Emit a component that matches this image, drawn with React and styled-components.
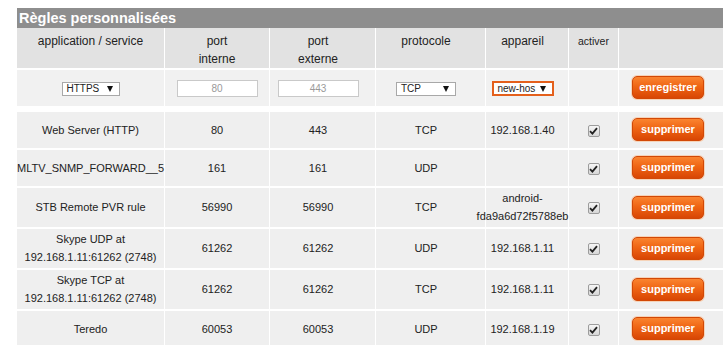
import React from 'react'
import styled, { createGlobalStyle } from 'styled-components'

const GlobalStyle = createGlobalStyle`
  html, body {
    margin: 0;
    background: #fff;
    overflow: hidden;
  }
  body {
    font-family: "Liberation Sans", Arial, sans-serif;
    color: #222;
  }
`

const Page = styled.div`
  padding: 8px 0 0 17px;
  width: 711px;
`

const Title = styled.h2`
  margin: 0;
  height: 20px;
  line-height: 21px;
  padding-left: 2px;
  background: #8e8e8e;
  color: #fff;
  font-size: 14.5px;
  font-weight: bold;
`

const Table = styled.table`
  table-layout: fixed;
  width: 711px;
  border-collapse: separate;
  border-spacing: 0;
`

const Col = styled.col`
  width: ${p => p.$w}px;
`

const HeadCell = styled.th`
  background: #e2e2e2;
  color: #222;
  font-weight: normal;
  font-size: ${p => (p.$small ? '10.5px' : '12px')};
  line-height: 18px;
  padding: 4px ${p => (p.$shift ? 9 : 0)}px 0 0;
  vertical-align: top;
  text-align: center;
  border-right: 1px solid #fff;
  border-bottom: 2px solid #fff;
  &:last-child {
    border-right: 0;
  }
`

const Row = styled.tr`
  height: 38px;
`

const InputRow = styled.tr`
  height: 42px;
  td {
    background: #f1f1f1;
    border-bottom-width: 6px;
  }
`

const Cell = styled.td`
  background: #efefef;
  color: #222;
  font-size: 11px;
  line-height: 18px;
  padding: 1px ${p => (p.$shift ? 9 : 0)}px 2px ${p => (p.$left ? 13 : 0)}px;
  text-align: ${p => (p.$left ? 'left' : 'center')};
  vertical-align: middle;
  border-right: 1px solid #fff;
  border-bottom: 2px solid #fff;
  &:last-child {
    border-right: 0;
  }
`

const Device = styled.div`
  margin: 0 -12px;
`

const Select = styled.div`
  display: inline-flex;
  align-items: center;
  justify-content: space-between;
  box-sizing: border-box;
  width: ${p => p.$w}px;
  height: ${p => (p.$focus ? 15 : 14)}px;
  padding: 0 6px 0 4px;
  background: #fff;
  border: ${p => (p.$focus ? '2px solid #e4601c' : '1px solid #a8a8a8')};
  font-size: 10px;
  line-height: 12px;
  color: #222;
  vertical-align: middle;
`

const Arrow = styled.span`
  width: 0;
  height: 0;
  border-left: 3.5px solid transparent;
  border-right: 3.5px solid transparent;
  border-top: 6px solid #111;
`

const TextInput = styled.input`
  box-sizing: border-box;
  width: 81px;
  height: 17px;
  padding: 0;
  border: 1px solid #c9c9c9;
  background: #fff;
  font: 10px "Liberation Sans", Arial, sans-serif;
  text-align: center;
  vertical-align: middle;
  &::placeholder {
    color: #9a9a9a;
  }
`

const Button = styled.button`
  box-sizing: border-box;
  width: 72px;
  height: 23px;
  padding: 0 0 1px;
  border: 1px solid #d24806;
  border-radius: 5px;
  background: linear-gradient(#fa8430, #ef6514 45%, #d84604);
  box-shadow: 0 0 0 1px #f6d3b8;
  color: #fff;
  font: bold 11px "Liberation Sans", Arial, sans-serif;
  vertical-align: middle;
`

const Check = styled.span`
  display: inline-flex;
  align-items: center;
  justify-content: center;
  box-sizing: border-box;
  width: 12px;
  height: 12px;
  border: 1px solid #9c9c9c;
  border-radius: 2px;
  background: linear-gradient(#f6f6f6, #d6d6d6);
  vertical-align: middle;
`

const CheckMark = () => (
  <svg width="9" height="8" viewBox="0 0 9 8">
    <path d="M1 4.2 L3.4 6.6 L8 1.2" fill="none" stroke="#222" strokeWidth="1.8" />
  </svg>
)

const rules = [
  { name: 'Web Server (HTTP)', internal: '80', external: '443', proto: 'TCP', device: '192.168.1.40' },
  { name: 'MLTV_SNMP_FORWARD__5', internal: '161', external: '161', proto: 'UDP', device: '' },
  { name: 'STB Remote PVR rule', internal: '56990', external: '56990', proto: 'TCP', device: 'android-fda9a6d72f5788eb' },
  { name: 'Skype UDP at 192.168.1.11:61262 (2748)', internal: '61262', external: '61262', proto: 'UDP', device: '192.168.1.11' },
  { name: 'Skype TCP at 192.168.1.11:61262 (2748)', internal: '61262', external: '61262', proto: 'TCP', device: '192.168.1.11' },
  { name: 'Teredo', internal: '60053', external: '60053', proto: 'UDP', device: '192.168.1.19' },
]

export default function App() {
  return (
    <Page>
      <GlobalStyle />
      <Title>Règles personnalisées</Title>
      <Table>
        <colgroup>
          <Col $w={148} />
          <Col $w={105} />
          <Col $w={106} />
          <Col $w={110} />
          <Col $w={83} />
          <Col $w={50} />
          <Col $w={109} />
        </colgroup>
        <thead>
          <tr>
            <HeadCell>application / service</HeadCell>
            <HeadCell>port<br />interne</HeadCell>
            <HeadCell $shift>port<br />externe</HeadCell>
            <HeadCell $shift>protocole</HeadCell>
            <HeadCell $shift>appareil</HeadCell>
            <HeadCell $small>activer</HeadCell>
            <HeadCell />
          </tr>
        </thead>
        <tbody>
          <InputRow>
            <Cell>
              <Select $w={58}>
                <span>HTTPS</span>
                <Arrow />
              </Select>
            </Cell>
            <Cell>
              <TextInput placeholder="80" />
            </Cell>
            <Cell $shift>
              <TextInput placeholder="443" />
            </Cell>
            <Cell $shift>
              <Select $w={60}>
                <span>TCP</span>
                <Arrow />
              </Select>
            </Cell>
            <Cell $shift>
              <Select $w={62} $focus>
                <span>new-hos</span>
                <Arrow />
              </Select>
            </Cell>
            <Cell />
            <Cell $left>
              <Button>enregistrer</Button>
            </Cell>
          </InputRow>
          {rules.map((rule, i) => (
            <Row key={i}>
              <Cell>{rule.name}</Cell>
              <Cell>{rule.internal}</Cell>
              <Cell $shift>{rule.external}</Cell>
              <Cell $shift>{rule.proto}</Cell>
              <Cell $shift>
                <Device>{rule.device}</Device>
              </Cell>
              <Cell>
                <Check>
                  <CheckMark />
                </Check>
              </Cell>
              <Cell $left>
                <Button>supprimer</Button>
              </Cell>
            </Row>
          ))}
        </tbody>
      </Table>
    </Page>
  )
}
